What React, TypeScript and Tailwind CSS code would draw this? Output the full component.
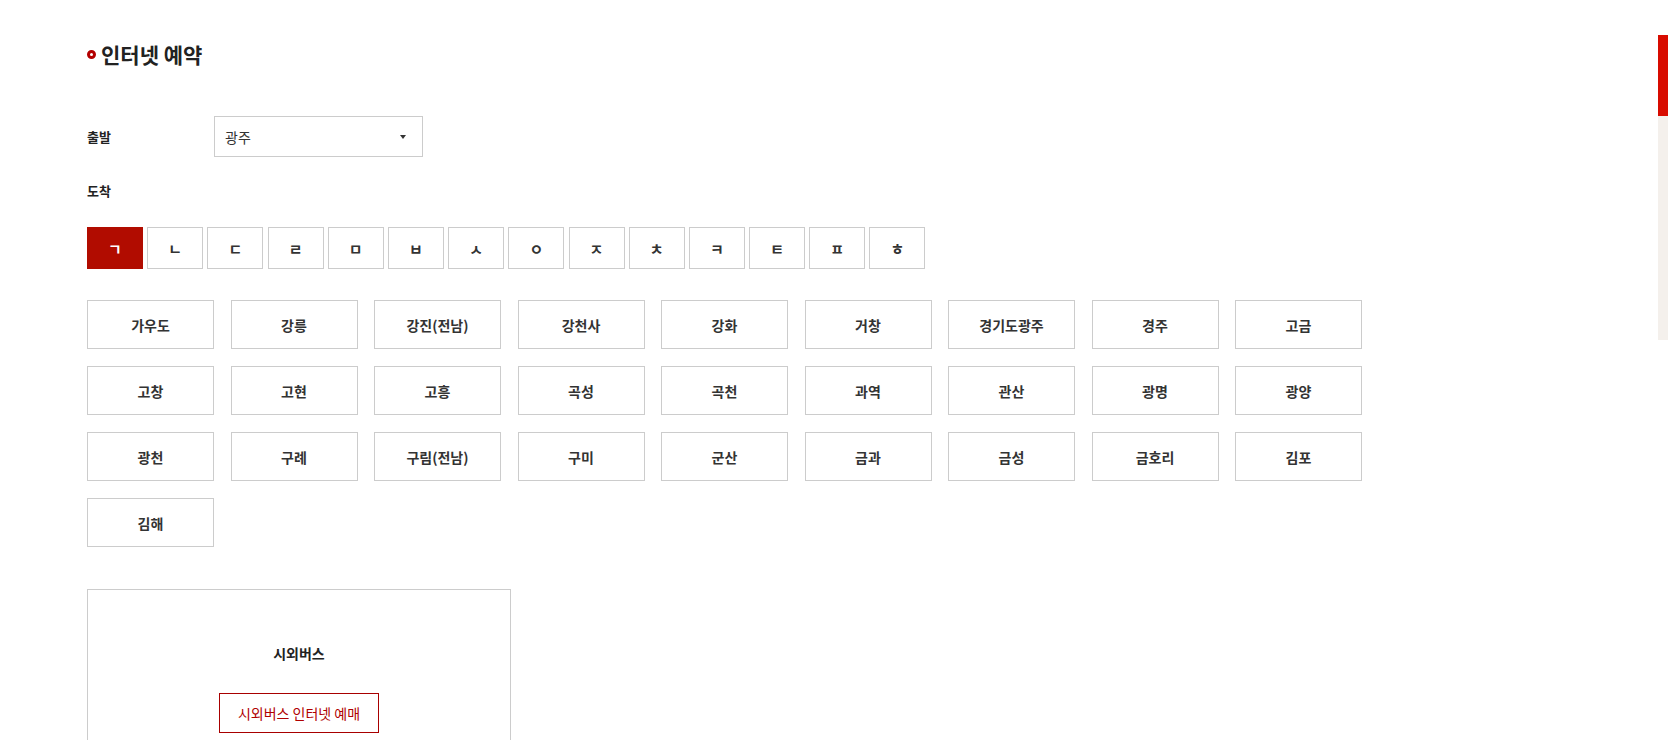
import React, { useState } from 'react';

const font = '"Noto Sans CJK KR", "Noto Sans", sans-serif';

const letters = ['ㄱ', 'ㄴ', 'ㄷ', 'ㄹ', 'ㅁ', 'ㅂ', 'ㅅ', 'ㅇ', 'ㅈ', 'ㅊ', 'ㅋ', 'ㅌ', 'ㅍ', 'ㅎ'];

const cities = [
	'가우도', '강릉', '강진(전남)', '강천사', '강화', '거창', '경기도광주', '경주', '고금',
	'고창', '고현', '고흥', '곡성', '곡천', '과역', '관산', '광명', '광양',
	'광천', '구례', '구림(전남)', '구미', '군산', '금과', '금성', '금호리', '김포',
	'김해',
];

export default function App() {
	const [letter, setLetter] = useState('ㄱ');

	return (
		<div
			className="relative h-[740px] overflow-hidden bg-white pl-[87px] pt-[40px] text-[#222]"
			style={{ fontFamily: font }}
		>
			{/* TITLE */}
			<div className="flex h-[28px] items-center gap-[5px]">
				<span className="block h-[9px] w-[9px] rounded-full border-[3px] border-[#b30000] bg-white" />
				<h2 className="text-[21px] font-bold leading-[28px] text-[#222]">인터넷 예약</h2>
			</div>

			{/* 출발 */}
			<div className="mt-[48px] flex items-center">
				<p className="w-[127px] text-[13px] font-bold leading-[20px]">출발</p>
				<div className="flex h-[41px] w-[209px] items-center justify-between border border-[#ccc] pl-[10px] pr-[16px]">
					<span className="text-[14px] leading-[20px] text-[#333]">광주</span>
					<span className="block h-0 w-0 border-x-[3.5px] border-t-[4px] border-x-transparent border-t-[#333]" />
				</div>
			</div>

			{/* 도착 */}
			<p className="mt-[24px] text-[13px] font-bold leading-[20px]">도착</p>

			<div className="mt-[26px] flex gap-[4.2px]">
				{letters.map(l => (
					<button
						key={l}
						onClick={() => setLetter(l)}
						className={`flex h-[42px] w-[56px] items-center justify-center border text-[15px] font-bold leading-none ${
							letter === l
								? 'border-[#b10c00] bg-[#b10c00] text-white'
								: 'border-[#ccc] bg-white text-[#333]'
						}`}
					>
						{l}
					</button>
				))}
			</div>

			{/* CITY LIST */}
			<div className="mt-[31px] grid w-fit grid-cols-[repeat(9,127px)] gap-x-[16.5px] gap-y-[17px]">
				{cities.map(c => (
					<button
						key={c}
						className="flex h-[49px] items-center justify-center border border-[#ccc] bg-white text-[14px] font-bold leading-none text-[#333]"
					>
						{c}
					</button>
				))}
			</div>

			{/* RESULT */}
			<div className="mt-[42px] flex h-[200px] w-[424px] flex-col items-center border border-[#ccc] pt-[53px]">
				<p className="text-[14px] font-bold leading-[20px] text-[#222]">시외버스</p>
				<button className="mt-[30px] flex h-[40px] w-[160px] items-center justify-center border border-[#a80000] text-[14px] leading-none text-[#b00000]">
					시외버스 인터넷 예매
				</button>
			</div>

			{/* side scroll indicator */}
			<div className="absolute right-0 top-[35px] h-[305px] w-[10px] bg-[#f4f0ec]">
				<div className="h-[81px] w-full bg-[#d80c00]" />
			</div>
		</div>
	);
}
